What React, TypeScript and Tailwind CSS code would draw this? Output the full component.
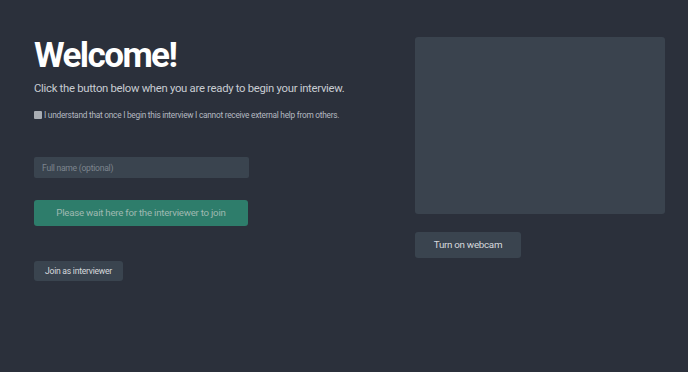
export default function App() {
  return (
    <div className="min-h-[372px] w-full bg-[#2b303b] font-['Roboto',sans-serif] flex pl-[34px] pt-[37px]">
      <div className="w-[381px] flex flex-col">
        <h1 className="text-[35px] leading-[38px] font-bold tracking-[-0.045em] text-white">Welcome!</h1>
        <p className="text-[11.3px] leading-[16px] tracking-[-0.025em] text-[#c8ccd2] mt-[6px]">
          Click the button below when you are ready to begin your interview.
        </p>
        <label className="flex items-center gap-[2px] mt-[12px] text-[8.3px] leading-[12px] tracking-[-0.03em] text-[#b4b9c0]">
          <input type="checkbox" className="w-[8px] h-[8px] appearance-none bg-[#a9adb3] rounded-[1px]" />
          I understand that once I begin this interview I cannot receive external help from others.
        </label>
        <input
          placeholder="Full name (optional)"
          className="mt-[36px] w-[215px] h-[21px] bg-[#3a444f] rounded-[2px] px-[8px] text-[8.6px] tracking-[-0.03em] text-[#c8ccd2] placeholder:text-[#7d858e] outline-none"
        />
        <button className="mt-[22px] w-[214px] h-[26px] bg-[#2e7d6b] rounded-[3px] text-[9.7px] tracking-[-0.025em] text-[#9fb9b1]">
          Please wait here for the interviewer to join
        </button>
        <button className="mt-[35px] w-[89px] h-[20px] bg-[#3a444f] rounded-[3px] text-[8.6px] tracking-[-0.03em] text-[#d6d9dd]">
          Join as interviewer
        </button>
      </div>
      <div className="flex flex-col">
        <div className="w-[250px] h-[177px] bg-[#3a434e] rounded-[3px]" />
        <button className="mt-[18px] w-[106px] h-[26px] bg-[#3a444f] rounded-[3px] text-[9.8px] tracking-[-0.03em] text-[#d6d9dd]">
          Turn on webcam
        </button>
      </div>
    </div>
  );
}
